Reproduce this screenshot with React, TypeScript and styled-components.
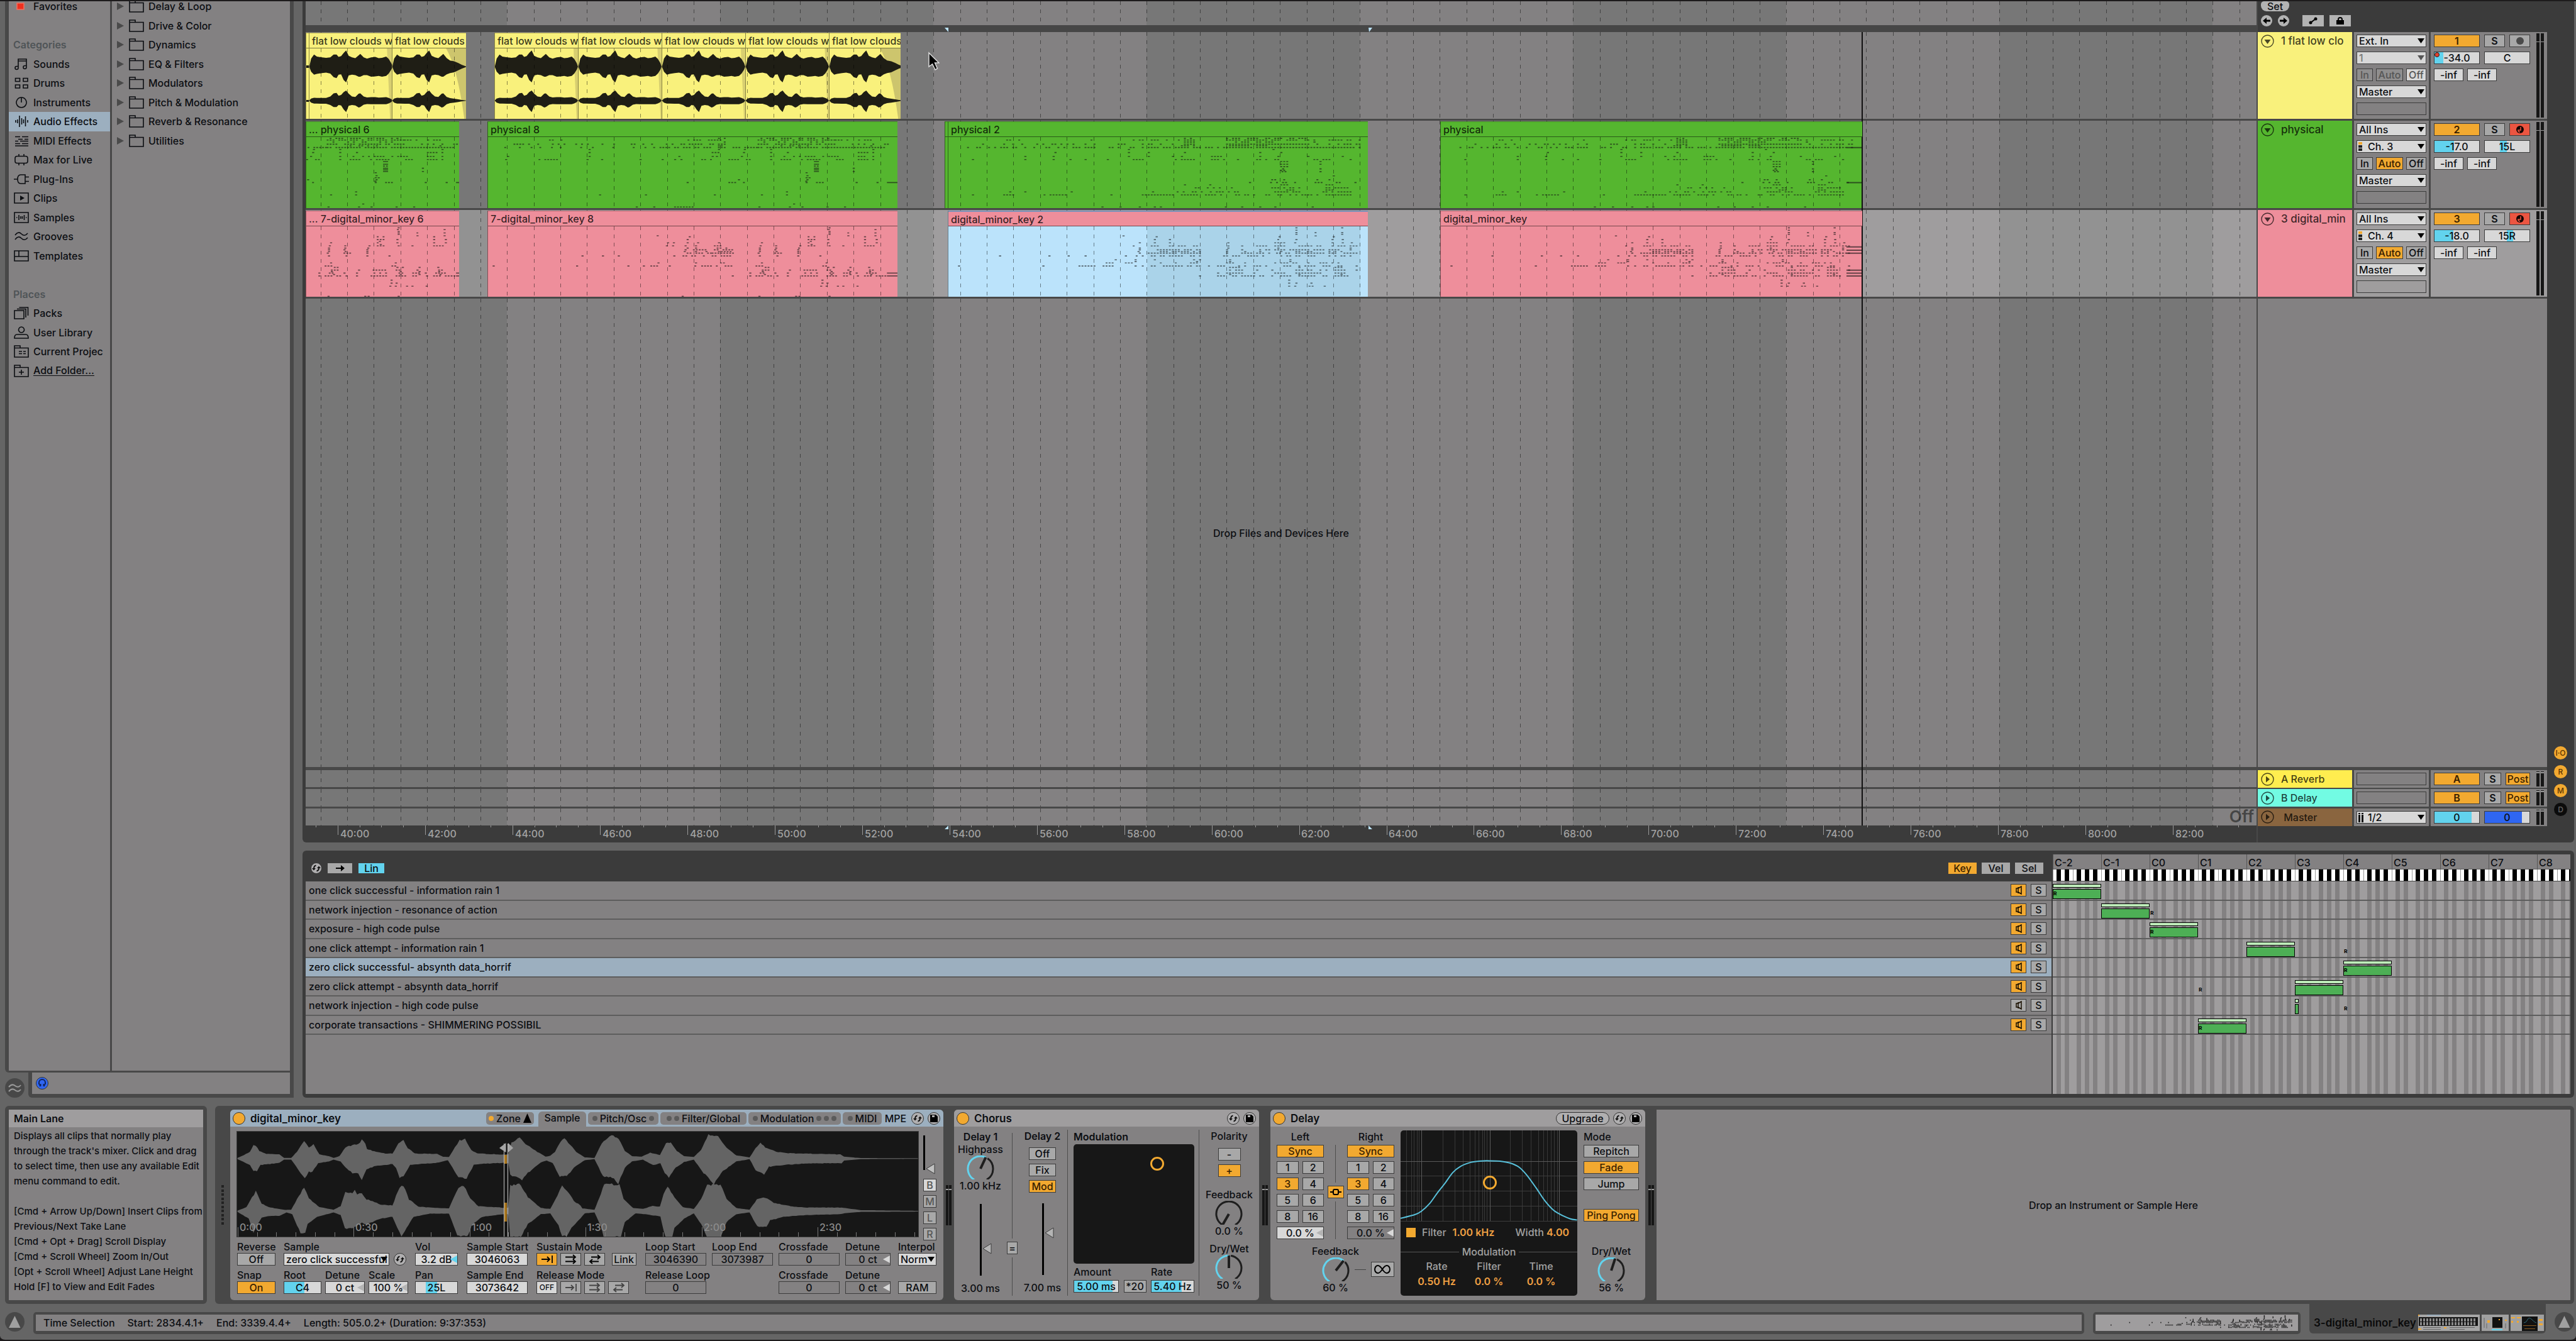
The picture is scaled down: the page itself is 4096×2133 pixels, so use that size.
import React, { ReactNode } from 'react';
import styled, { createGlobalStyle, css } from 'styled-components';

const c = {
  bg: '#656565',
  frame: '#484848',
  deep: '#3b3b3b',
  panel: '#838182',
  band: '#777777',
  light: '#9f9d9e',
  lightBand: '#929292',
  button: '#a8a8a8',
  field: '#d8d8d8',
  orange: '#f2a930',
  cyan: '#62d3ee',
  blue: '#2f66f2',
  select: '#9cafbf',
  ink: '#0c0e12',
  line: '#3c3c3c',
  screen: '#171717',
  yellow: '#f9f17c',
  green: '#55b62f',
  pink: '#ee8e9b',
  sky: '#bbe3fb',
};

const Global = createGlobalStyle`
  *, *::before, *::after { box-sizing: border-box; }
  body { margin: 0; background: #1d1b1c; font: 500 16px/20px Inter, "Liberation Sans", sans-serif; color: ${c.ink}; }
  button, input, select { font: inherit; color: inherit; margin: 0; padding: 0; border-radius: 0; }
  ul { list-style: none; margin: 0; padding: 0; }
  a { color: inherit; text-decoration: none; }
  svg { display: block; flex: none; }
`;

/* ---------- shared controls ---------- */

const Button = styled.button<{ $w?: number; $on?: boolean; $tone?: string; $dim?: boolean; $strong?: boolean; $bare?: boolean }>`
  width: ${p => (p.$w ? p.$w + 'px' : '100%')};
  height: 20px;
  flex: none;
  display: flex;
  align-items: center;
  justify-content: center;
  white-space: nowrap;
  border: ${p => (p.$bare ? 0 : 1)}px solid ${c.line};
  background: ${p => p.$tone || (p.$on ? c.orange : c.button)};
  color: ${p => (p.$dim ? '#565656' : p.$on ? '#3a1f00' : c.ink)};
  font-weight: ${p => (p.$strong ? 600 : 500)};
  line-height: 18px;
`;

const Input = styled.input<{ $w?: number; $from?: number; $to?: number; $fill?: string; $off?: boolean }>`
  width: ${p => (p.$w ? p.$w + 'px' : '100%')};
  height: 20px;
  flex: none;
  text-align: center;
  border: 1px solid ${c.line};
  background: ${p => {
    const base = p.$off ? c.panel : c.field;
    const fill = p.$fill || c.cyan;
    const a = p.$from || 0;
    const b = p.$to || 0;
    return `linear-gradient(to right, ${base} ${a}%, ${fill} ${a}% ${b}%, ${base} ${b}%)`;
  }};
`;

const SelectBox = styled.div<{ $w?: number; $dim?: boolean; $inset?: number }>`
  position: relative;
  width: ${p => (p.$w ? p.$w + 'px' : '100%')};
  height: 20px;
  select {
    appearance: none;
    width: 100%;
    height: 20px;
    line-height: 18px;
    border: 1px solid ${c.line};
    background: ${c.field};
    color: ${p => (p.$dim ? '#777' : c.ink)};
    padding-left: ${p => p.$inset || 3}px;
    opacity: 1;
  }
`;
const SelectArrow = styled.svg`
  position: absolute;
  right: 3px;
  top: 6px;
  pointer-events: none;
`;
const SelectMark = styled.svg`
  position: absolute;
  left: 3px;
  top: 3px;
  pointer-events: none;
`;

function Select({ label, value, w, dim, mark }: { label: string; value: string; w?: number; dim?: boolean; mark?: 'midi' | 'bars' }) {
  return (
    <SelectBox $w={w} $dim={dim} $inset={mark ? 17 : 3}>
      <select aria-label={label} defaultValue={value}><option>{value}</option></select>
      {mark === 'midi' && (
        <SelectMark width="6" height="14"><path d="M0 0h6v4H0z" fill={c.orange} /><path d="M0 5h6v4H0zM0 10h6v4H0z" fill="#222" /></SelectMark>
      )}
      {mark === 'bars' && (
        <SelectMark width="8" height="15"><path d="M0 0h3v2H0zM5 0h3v2H5zM0 3h3v12H0zM5 3h3v12H5z" fill="#111" /></SelectMark>
      )}
      <SelectArrow width="11" height="8"><path d="M0 0h11L5.500 8z" fill={dim ? '#555' : '#000'} /></SelectArrow>
    </SelectBox>
  );
}

const HiddenRange = styled.input`
  position: absolute;
  inset: 0;
  width: 100%;
  height: 100%;
  opacity: 0;
`;
const RangeShell = styled.label`
  position: relative;
  display: block;
`;

const polar = (deg: number, r: number) => {
  const a = ((deg - 90) * Math.PI) / 180;
  return `${(23 + r * Math.cos(a)).toFixed(2)} ${(21 + r * Math.sin(a)).toFixed(2)}`;
};
const arc = (a: number, b: number) => `M${polar(a, 20)}A20 20 0 ${b - a > 180 ? 1 : 0} 1 ${polar(b, 20)}`;

function Knob({ label, angle }: { label: string; angle: number }) {
  return (
    <RangeShell>
      <svg width="46" height="38" fill="none" strokeWidth="3">
        {angle > -150 && <path d={arc(-150, angle)} stroke={c.cyan} />}
        <path d={arc(angle > -150 ? angle + 9 : -150, 150)} stroke="#1e1e1e" />
        <path d={`M23 21L${polar(angle, 20)}`} stroke="#1e1e1e" strokeWidth="4" />
      </svg>
      <HiddenRange type="range" aria-label={label} min={-150} max={150} defaultValue={angle} />
    </RangeShell>
  );
}

function Fader({ label, height, at }: { label: string; height: number; at: number }) {
  return (
    <RangeShell>
      <svg width="40" height={height}>
        <path d={`M19 0h3v${height}h-3z`} fill="#000" />
        <path d={`M24 ${at}l13 -8v16z`} fill="#b4b4b4" stroke={c.line} />
      </svg>
      <HiddenRange type="range" aria-label={label} defaultValue={50} />
    </RangeShell>
  );
}

const RoundButton = styled.button<{ $fill?: string }>`
  width: 20px;
  height: 20px;
  border-radius: 50%;
  border: 1px solid #333;
  background: ${p => p.$fill || '#b0afb0'};
  display: flex;
  align-items: center;
  justify-content: center;
  flex: none;
`;

const SwapIcon = () => (
  <svg width="14" height="14" viewBox="0 0 14 14" fill="none" stroke="#111" strokeWidth="2">
    <path d="M6.500 2.500Q3 3 3 8M7.500 11.500Q11 11 11 6" />
    <path d="M0 7h6L3 10.500zM8 7h6L11 3.500z" fill="#111" stroke="none" />
  </svg>
);
const DiskIcon = () => (
  <svg width="12" height="12" viewBox="0 0 12 12"><path d="M0 0h9l3 3v9H0z" fill="#000" /><path d="M3 1h4v3H3z" fill="#b0afb0" /></svg>
);

/* ---------- frame ---------- */

const Shell = styled.div`
  height: 100vh;
  display: flex;
  flex-direction: column;
  gap: 13px;
  padding: 0 3px 9px 8px;
  background: ${c.bg};
  border-top: 2px solid #1d1b1c;
  border-bottom: 2px solid #1d1b1c;
  border-radius: 0 0 8px 8px;
  overflow: hidden;
`;
const Upper = styled.div`
  flex: 1;
  min-height: 0;
  display: flex;
  gap: 14px;
`;
const MainColumn = styled.div`
  flex: 1;
  min-width: 0;
  display: flex;
  flex-direction: column;
  gap: 13px;
`;

/* ---------- browser ---------- */

const Sidebar = styled.aside`
  width: 459px;
  flex: none;
  display: flex;
  flex-direction: column;
`;
const BrowserFrame = styled.div`
  flex: 1;
  min-height: 0;
  display: grid;
  grid-template-columns: 161px 1fr;
  gap: 3px;
  padding: 0 6px 3px 6px;
  background: ${c.frame};
  border-radius: 0 0 0 6px;
`;
const BrowserColumn = styled.nav`
  background: ${c.panel};
  overflow: hidden;
`;
const EntryList = styled.ul<{ $rows: number }>`
  height: ${p => (p.$rows * 61) / 2}px;
  margin-top: -7px;
  display: grid;
  grid-auto-rows: 1fr;
  line-height: 16px;
`;
const Entry = styled.li<{ $heading?: boolean; $active?: boolean; $gap?: number }>`
  display: flex;
  align-items: center;
  white-space: nowrap;
  padding-left: ${p => (p.$heading ? 7 : 8)}px;
  color: ${p => (p.$heading ? '#4f5457' : 'inherit')};
  font-weight: ${p => (p.$heading ? 600 : 500)};
  background: ${p => (p.$active ? c.select : 'none')};
  a { display: flex; align-items: center; gap: ${p => p.$gap || 7}px; }
`;
const Underlined = styled.span`
  border-bottom: 1px solid ${c.ink};
`;
const SidebarFoot = styled.div`
  display: flex;
  justify-content: space-between;
`;
const PreviewFrame = styled.div`
  width: 422px;
  padding: 0 6px 6px;
  background: ${c.frame};
  border-radius: 0 0 0 6px;
`;
const PreviewBar = styled.div`
  height: 34px;
  background: ${c.panel};
  display: flex;
  align-items: center;
  padding-left: 6px;
`;
const CornerButton = styled.button<{ $top?: boolean }>`
  width: 31px;
  height: 31px;
  border: 0;
  border-radius: 50%;
  background: ${c.frame};
  display: flex;
  align-items: center;
  justify-content: center;
  align-self: ${p => (p.$top ? 'flex-start' : 'flex-end')};
`;

const glyph: Record<string, ReactNode> = {
  favorites: <path d="M5 5h11v10H5z" fill="#ee2f1d" stroke="#f07060" />,
  sounds: <path d="M7 16V2h13v13M7 5h13M7 16a2.500 2.500 0 1 1 -2.500 -2.500H7M20 15a2.500 2.500 0 1 1 -2.500 -2.500H20" />,
  drums: <path d="M2.500 2.500h7v5h-7zM15 2.500h7v5h-7zM2.500 13h7v5h-7zM15 13h7v5h-7z" />,
  instruments: <path d="M12 2a8 8 0 1 0 .1 0zM12 2v8" />,
  audio: <path d="M3 8v4M6 7v6M9 1v18M12.500 5v10M15.500 7v6M18.500 2v16M22 8v4" />,
  midi: <path d="M2 3.500h8M13 3.500h10M7 7.500h7M17 7.500h6M2 10.500h5M10 10.500h13M2 14.500h8M13 14.500h10M2 18h21" />,
  max: <path d="M5 4.500h14q3 0 3 3v5q0 3 -3 3H5q-3 0 -3 -3v-5q0 -3 3 -3zM8 1v3.500M16 1v3.500M8 15.500V19M16 15.500V19" />,
  plug: <path d="M0 10h6M18 3H11Q6 3 6 10T11 17H18zM18 6.500h6M18 13.500h6" />,
  clips: <><path d="M1 2h22v16H1z" /><path d="M10 6l7 4l-7 4z" fill="#0c0e12" stroke="none" /></>,
  samples: <path d="M1 2h22v16H1zM4 10h1.500M8 6v8M11 8v4M13.500 8v4M16.500 6v8M19 10h1.500" />,
  grooves: <path d="M2 8Q7 1 12 6T22 5M2 15Q7 8 12 13T22 12" />,
  templates: <path d="M1 2h22v16H1zM8 2v9M1 11h22" />,
  packs: <path d="M1 6h15v13H1zM5 3.500h14V17M8.500 1h14v13" />,
  user: <path d="M12 1a4.500 4.500 0 1 0 .1 0zM5 13h14q4 0 4 6H1q0 -6 4 -6z" />,
  project: <path d="M1 4.500V1h9v3.500M1 4.500h22V19H1zM8 10h5M8 13.500h5M15 10h4M15 13.500h4" />,
  add: <path d="M1 4.500V1h9v3.500M1 4.500h22V19H1zM12 8v8M8 12h8" />,
  folder: <path d="M1 4.500V1h9v3.500M1 4.500h22V19H1z" />,
};
const Glyph = ({ name }: { name: string }) => (
  <svg width="24" height="20" viewBox="0 0 24 20" fill="none" stroke="#0c0e12" strokeWidth="1.600">{glyph[name]}</svg>
);

const places: [string, string][] = [
  ['favorites', 'Favorites'], ['', ''], ['#', 'Categories'], ['sounds', 'Sounds'], ['drums', 'Drums'],
  ['instruments', 'Instruments'], ['audio', 'Audio Effects'], ['midi', 'MIDI Effects'], ['max', 'Max for Live'],
  ['plug', 'Plug-Ins'], ['clips', 'Clips'], ['samples', 'Samples'], ['grooves', 'Grooves'], ['templates', 'Templates'],
  ['', ''], ['#', 'Places'], ['packs', 'Packs'], ['user', 'User Library'], ['project', 'Current Projec'], ['add', 'Add Folder...'],
];
const folders = ['Delay & Loop', 'Drive & Color', 'Dynamics', 'EQ & Filters', 'Modulators', 'Pitch & Modulation', 'Reverb & Resonance', 'Utilities'];

function Browser() {
  return (
    <Sidebar>
      <BrowserFrame>
        <BrowserColumn aria-label="Places">
          <EntryList $rows={places.length}>
            {places.map(([icon, text], i) => (
              <Entry key={i} $heading={icon === '#'} $active={icon === 'audio'}>
                {icon === '#' || !icon ? text : (
                  <a href={'#' + icon}>
                    <Glyph name={icon} />
                    {icon === 'add' ? <Underlined>{text}</Underlined> : text}
                  </a>
                )}
              </Entry>
            ))}
          </EntryList>
        </BrowserColumn>
        <BrowserColumn aria-label="Content">
          <EntryList $rows={folders.length}>
            {folders.map(text => (
              <Entry key={text}>
                <a href="#folder">
                  <svg width="12" height="12"><path d="M0 0l11 6l-11 6z" fill="#4a4a4a" /></svg>
                  <Glyph name="folder" />
                  {text}
                </a>
              </Entry>
            ))}
          </EntryList>
        </BrowserColumn>
      </BrowserFrame>
      <SidebarFoot>
        <CornerButton aria-label="Groove pool">
          <svg width="21" height="16" fill="none" stroke="#9a9a9a" strokeWidth="2"><path d="M1 6Q6 0 11 4T20 3M1 13Q6 7 11 11T20 10" /></svg>
        </CornerButton>
        <PreviewFrame>
          <PreviewBar>
            <RoundButton aria-label="Preview" $fill={c.blue}>
              <svg width="16" height="16" viewBox="0 0 16 16" fill="none" stroke="#10245f" strokeWidth="2"><path d="M3 10V7a5 5 0 0 1 10 0v3" /><path d="M5 9v4M11 9v4" strokeWidth="3" /></svg>
            </RoundButton>
          </PreviewBar>
        </PreviewFrame>
      </SidebarFoot>
    </Sidebar>
  );
}

/* ---------- arrangement ---------- */

const BAND = 339;
const SCALE = 0.839;
const ORIGIN = 580;
const at = (x: number) => Math.round((x - ORIGIN) * SCALE);

const Arrangement = styled.section`
  flex: 1;
  min-height: 0;
  display: flex;
  padding-left: 5px;
  background: ${c.deep};
  border-radius: 0 0 6px 6px;
`;
const Timeline = styled.div`
  position: relative;
  flex: 1;
  min-width: 0;
  display: flex;
  flex-direction: column;
  border-right: 2px solid ${c.frame};
`;
const bands = (a: string, b: string) => css`
  background: repeating-linear-gradient(to right, ${a} 0 ${BAND}px, ${b} ${BAND}px ${BAND * 2}px) -19px 0 / calc(100% + 19px) 100%;
`;
const Overview = styled.div`
  position: relative;
  height: 38px;
  ${bands(c.band, c.panel)}
`;
const ScrubBar = styled.div`
  position: relative;
  height: 11px;
  background: #464646;
`;
const TrackStack = styled.div`
  height: 424px;
  flex: none;
  display: grid;
  grid-auto-rows: 1fr;
`;
const Lane = styled.div<{ $selected?: boolean }>`
  position: relative;
  overflow: hidden;
  border-bottom: 3px solid ${c.frame};
  ${p => (p.$selected ? bands(c.lightBand, c.light) : bands(c.band, c.panel))}
`;
const DropArea = styled.div`
  position: relative;
  flex: 1;
  display: flex;
  align-items: center;
  justify-content: center;
  ${bands(c.band, c.panel)}
`;
const ReturnStack = styled.div`
  height: 93px;
  flex: none;
  border-top: 5px solid ${c.frame};
  display: grid;
  grid-auto-rows: 1fr;
  gap: 3px;
  background: ${c.frame};
`;
const ReturnLane = styled.div`
  position: relative;
  overflow: hidden;
  display: flex;
  align-items: center;
  justify-content: flex-end;
  padding-right: 4px;
  ${bands(c.band, c.panel)}
`;
const AutomationOff = styled.span`
  font-size: 26px;
  font-weight: 600;
  color: #454545;
`;
const Overlay = styled.svg`
  position: absolute;
  inset: 0;
  width: 100%;
  height: 100%;
  pointer-events: none;
`;
const Ruler = styled.div`
  position: relative;
  height: 27px;
  overflow: hidden;
`;
const TimeLabel = styled.span`
  position: absolute;
  top: 3px;
  color: #a2a2a2;
  padding-left: 4px;
`;
const PlayEnd = styled.div`
  position: absolute;
  top: 49px;
  bottom: 27px;
  width: 2px;
  background: #111;
`;
const LoopMark = styled.svg`
  position: absolute;
  bottom: 0;
`;
const Pointer = styled.svg`
  position: absolute;
  left: 990px;
  top: 80px;
  z-index: 5;
`;

const barPath = Array.from({ length: 130 }, (_, i) => `M${Math.round(23.7 + (i * BAND) / 8) + 0.5} 0V1200`).join('');
const BarLines = () => (
  <Overlay><path d={barPath} stroke="#000" strokeOpacity="0.45" strokeDasharray="6 7" /></Overlay>
);

const Clip = styled.div<{ $color: string }>`
  position: absolute;
  top: 1px;
  bottom: 0;
  overflow: hidden;
  background: ${p => p.$color};
  border-left: 1px solid rgba(0, 0, 0, 0.45);
`;
const ClipName = styled.div<{ $color: string; $lit?: boolean }>`
  height: 25px;
  padding: 3px 0 0 4px;
  line-height: 19px;
  white-space: nowrap;
  overflow: hidden;
  background: ${p => p.$color};
  color: rgba(0, 0, 0, 0.78);
  border-top: ${p => (p.$lit ? '2px solid #7b92b8' : '1px solid rgba(0, 0, 0, 0.3)')};
  border-bottom: 1px solid rgba(0, 0, 0, 0.5);
`;
const ClipTitleLayer = styled.div`
  position: absolute;
  top: 1px;
  z-index: 2;
`;
const ClipShade = styled.div`
  position: absolute;
  top: 25px;
  bottom: 0;
  background: rgba(80, 130, 140, 0.16);
`;
const ClipBody = styled.div`
  padding-top: 26px;
`;
const AudioBody = styled.svg`
  padding-top: 25px;
`;

function rng(seed: number) {
  let s = seed;
  return () => {
    s = (s * 1664525 + 1013904223) % 4294967296;
    return s / 4294967296;
  };
}
/* Each row reads "y: x x-x@density ..." in the pattern's own units. */
function noteRects(rows: string[], start: number, end: number, unit: number, sx: number, sy: number, top: number, h: number, shift = 0) {
  const rand = rng(7);
  let d = '';
  rows.forEach(row => {
    const [y, rest] = row.split(':');
    const py = ((+y - top) * sy).toFixed(1);
    const put = (x: number, w: number) => {
      const px = x + shift;
      if (px >= start && px < end) d += `M${((px - start) * sx).toFixed(1)} ${py}h${(w * sx).toFixed(1)}v${h}h-${(w * sx).toFixed(1)}z`;
    };
    rest.trim().split(' ').forEach(tok => {
      const m = tok.match(/^(\d+)-(\d+)@([\d.]+)$/);
      if (!m) put(+tok, unit * 0.7);
      else if (m[3] === '1') put(+m[1], +m[2] - +m[1]);
      else for (let x = +m[1]; x <= +m[2]; x += unit) if (rand() < +m[3]) put(x, unit * 0.62);
    });
  });
  return d;
}

const physLong = [
  '687: 415-430@.8 485-615@.7', '695: 120-290@.12 290-430@.35 415-430@.9 485-615@.85 615-705@.4', '705: 415-430@.7 500-560@.6 630',
  '716: 40-290@.25 290-420@.4 410-430@.9 485-620@.9 630-705@.5', '723: 410-430@.8 485-560@.6', '732: 40-350@.4 350-485@.7 485-705@.95',
  '742: 322 562', '757: 200 322 355 415 540 575', '776: 150 197 322 355 395 410 450-475@.8 540 570 620 677',
  '792: 63 150 197 225 250 287 310-345@.6 385-480@.65 503 535-575@.6 615-655@.5 690', '802: 575-585@.9 640', '815: 575-585@.9 640', '827: 575-585@.9',
  '838: 578 640', '845: 575-585@.9', '852: 577-582@.9 640', '873: 662', '892: 560-580@.7 630-665@.5', '906: 523 558-600@.5 632-680@.6 698',
  '917: 415 457 575-590@.7 650-660@.8', '932: 403-505@.35 560-610@.65 645-690@.6', '943: 580-595@.6 650-662@.8', '952: 125 150 227 362 403-505@.5 555-610@.7 645-690@.7',
  '967: 63 115-130@.9 182-235@.6 293 345-485@.7 500-635@.6 645-690@.8', '1027: 278 308 340 365 375 483 510 540 565 627',
];
const physEight = [
  '687: 1000-1020@.8 1095-1250@.7 1262', '695: 560-700@.12 920-1020@.5 1095-1280@.8 1280-1380@.4', '705: 1000-1020@.7 1095-1250@.5',
  '716: 475-560@.2 560-930@.3 930-1020@.6 1095-1280@.85 1300-1410@.5', '724: 1000-1010@.8 1150-1220@.6 1365', '732: 460-860@.22 860-1095@.7 1095-1400@.95',
  '742: 690 1000 1062 1125 1370', '757: 690 985-1000@.8 1060 1125 1165 1335-1375@.7', '776: 495 690 905 985 995 1055 1125 1150-1160@.9 1180-1290@.5 1335-1375@.7',
  '792: 490 570-620@.7 685 720 812 865 895 910 960-1000@.8 1025-1080@.8 1125 1150-1300@.65 1335-1375@.8', '802: 1230-1242@1', '815: 1230-1242@1', '824: 1230-1242@.9',
  '835: 1230-1242@1 1323', '843: 1230-1242@1', '851: 1230-1242@1 1323', '857: 1210', '872: 1212', '882: 1210 1217', '892: 1048 1212', '899: 1209',
  '906: 925 1025-1065@.7 1210 1235-1250@.9 1330 1380 1405-1431@1', '952: 1163', '967: 715 825 990 1103 1163', '1012: 1180', '1027: 803 845 895-940@.7 1097 1170 1200 1260 1302',
];
const keyLong = [
  '1128: 600 676', '1140: 600', '1152: 600 632-640@.9 676', '1160: 600 676', '1168: 313 632', '1172: 368 572 662', '1186: 365 390 570-577@.9 600 660 677',
  '1202: 340 365 390 487 565-580@.9 598 660 677 692', '1218: 330-342@.8 360-440@.6 487 510 535-550@.8 565-580@.8 595-645@.6 655-700@.6',
  '1228: 340 487 570 690', '1237: 340 370-440@.8 485 510 530-560@.7 565-600@.8 600-645@.85 655-670@.9 690',
  '1246: 338 375-440@.8 485 515 540 575 600-645@.8 655-690@.6', '1253: 340 355-440@.85 485 510-525@.9 535-558@.8 568-590@.8 600-645@.9 655-700@.75',
  '1267: 108 190 222 250 317 330-350@.8 360-440@.55 480-550@.7 565-645@.65 655-700@.6', '1286: 300 333 365 430 440 490 590', '1295: 333 435 490 590',
  '1302: 285-295@.9 317-333@.7 365-440@.4 485-515@.7 555-600@.5 620 640-670@.6', '1317: 40 180 240-320@.65 333 345-485@.55 500-550@.4 580-680@.6 700',
  '1324: 490-510@.8 605 665-680@.7', '1337: 490-515@.5 535 560 600-650@.6 665-680@.9 700', '1352: 470 485-510@.9 530 560-580@.8 600-640@.85 665-680@.95',
  '1359: 490 605 675', '1366: 440 470-550@.65 560-650@.8 660-700@.75', '1387: 588', '1402: 588 600 625', '1417: 588 598 612-630@.7 647',
];
const keyEight = [
  '1128: 1265', '1137: 1263 1375', '1146: 1265', '1153: 1265 1310-1320@.9 1375', '1160: 1265', '1167: 853 1310 1375', '1172: 930 1215-1230@.9 1350', '1186: 925 1215-1230@.95 1262 1350 1378',
  '1195: 1220', '1202: 878 892 925 950 1000 1103 1215-1232@.95 1262 1350 1378', '1210: 1222', '1217: 875 890 920 945 990-1030@.6 1100 1137 1195 1215-1230@.9 1265 1298 1350-1375@.8',
  '1228: 925 945 990-1020@.8 1098 1137 1192', '1237: 920 940-980@.7 990-1035@.9 1098 1135 1190', '1246: 918 945 970 1000-1030@.9 1098 1138 1190',
  '1253: 925-985@.9 985-1035@.95 1095 1135-1155@.9 1190', '1267: 673 722 760 893 915-975@.75 985-1030@.8 1098 1140 1190 1243', '1302: 855 945 1005-1015@.9 1103 1258',
  '1317: 460 660 783 820 838-855@.9 882 943 960-1035@.6 1090-1110@.8 1250-1260@.9', '1324: 1105-1125@.8 1262 1275 1315 1360', '1337: 1105-1120@.9 1170 1205-1235@.9 1260-1280@.8 1310 1355-1375@.8',
  '1345: 1105 1270 1315 1362', '1352: 1075 1100-1120@.9 1135 1165 1200-1235@.7 1260-1280@.9 1300-1320@.8 1330 1355-1380@.8 1405-1431@1', '1359: 1110 1270 1315 1365',
  '1366: 1033 1075 1090-1130@.9 1140 1165 1200-1235@.8 1260-1285@.95 1300-1320@.8 1333 1350-1400@.7 1405-1431@1', '1387: 1248', '1402: 1248 1260', '1417: 1245 1258 1285 1298 1332', '1467: 913 1097 1185 1193 1265',
];

type NoteSpec = { rows: string[]; start: number; end: number; shift?: number; wide?: boolean; tail?: number[] };
function Notes({ spec, top }: { spec: NoteSpec; top: number }) {
  const sx = spec.wide ? 0.9578 : 0.6635;
  const d = noteRects(spec.rows, spec.start, spec.end, spec.wide ? 5 : 7, sx, 0.3211, top, 1.6, spec.shift);
  return (
    <svg width="100%" height="112" fill="#141414" fillOpacity="0.62">
      <path d={d} />
      {spec.tail && <path d={spec.tail.map(y => `M645 ${((y - top) * 0.3211).toFixed(1)}h27v2h-27z`).join('')} />}
    </svg>
  );
}

type ClipSpec = { name: string; x0: number; x1: number; notes: NoteSpec; sky?: boolean };
const physClips: ClipSpec[] = [
  { name: '... physical 6', x0: 580, x1: 870.5, notes: { rows: physEight, start: 12, end: 380, shift: -1034 } },
  { name: 'physical 8', x0: 925, x1: 1701.6, notes: { rows: physEight, start: 449, end: 1431 } },
  { name: '', x0: 1791.5, x1: 1797.5, notes: { rows: [], start: 0, end: 1 } },
  { name: 'physical 2', x0: 1797.5, x1: 2593, notes: { rows: physLong, start: 24, end: 721, wide: true } },
  { name: 'physical', x0: 2730, x1: 3530, notes: { rows: physLong, start: 24, end: 721, wide: true, tail: [732, 906] } },
];
const keyClips: ClipSpec[] = [
  { name: '... 7-digital_minor_key 6', x0: 580, x1: 870.5, notes: { rows: keyEight, start: 12, end: 380, shift: -1034 } },
  { name: '7-digital_minor_key 8', x0: 925, x1: 1701.6, notes: { rows: keyEight, start: 449, end: 1431 } },
  { name: 'digital_minor_key 2', x0: 1797.5, x1: 2593, notes: { rows: keyLong, start: 24, end: 721, wide: true }, sky: true },
  { name: 'digital_minor_key', x0: 2730, x1: 3530, notes: { rows: keyLong, start: 24, end: 721, wide: true, tail: [1222, 1238, 1253, 1337, 1352, 1366] } },
];
const audioClips: [number, number][] = [[580, 586.5], [586.5, 743], [743, 884], [937, 1095.5], [1095.5, 1254.5], [1254.5, 1413], [1413, 1572], [1572, 1707]];

/* x, upper reach, lower reach for the two channels of one audio loop */
const loopShape = [
  [0, 3, 3, 2, 2], [4, 40, 25, 10, 10], [11, 60, 40, 14, 15], [18, 50, 36, 13, 15], [30, 46, 32, 13, 16], [40, 44, 30, 13, 16], [50, 46, 34, 20, 22], [58, 60, 52, 36, 32], [65, 60, 57, 38, 32],
  [70, 48, 40, 24, 22], [76, 52, 38, 28, 24], [82, 68, 66, 42, 44], [88, 80, 78, 50, 57], [94, 54, 44, 34, 26], [102, 46, 40, 20, 22], [110, 42, 42, 18, 24], [118, 56, 50, 34, 34], [122, 63, 50, 36, 32],
  [130, 46, 42, 20, 20], [138, 40, 42, 16, 17], [148, 46, 50, 17, 18], [158, 48, 48, 17, 18], [166, 42, 46, 15, 18], [174, 44, 50, 16, 18], [184, 50, 46, 17, 18], [190, 38, 34, 13, 14], [196, 18, 16, 8, 8], [200, 4, 3, 2, 2],
];
function loopPath(width: number, fade: boolean) {
  const pts = loopShape.filter(p => p[0] <= width);
  const k = (p: number[]) => (fade && p[0] > 125 ? Math.max(0.03, 1 - (p[0] - 125) / (width - 125)) : 1);
  const side = (mid: number, up: number, down: number) => {
    const tops = pts.map(p => `${(p[0] * 0.6635).toFixed(1)} ${(mid - p[up] * k(p) * 0.3211).toFixed(1)}`);
    const bots = pts.map(p => `${(p[0] * 0.6635).toFixed(1)} ${(mid + p[down] * k(p) * 0.3211).toFixed(1)}`).reverse();
    const tip = `L${(width * 0.6635).toFixed(1)} ${mid}`;
    return 'M' + tops.join('L') + tip + 'L' + bots.join('L') + 'z';
  };
  return side(29, 1, 2) + side(83, 3, 4);
}

function AudioLane() {
  return (
    <Lane>
      {audioClips.map(([a, b], i) => {
        const last = i === 2 || i === 7;
        const w = (b - a) * SCALE;
        return (
          <React.Fragment key={i}>
            <Clip $color={c.yellow} style={{ left: at(a), width: at(b) - at(a) }}>
              <AudioBody width="100%" height="137">
                {last && <path d={`M${w - 33} 0Q${w - 15} 30 ${w - 4} 112H${w}V0z`} fill="#cdc56d" />}
                {!last && i > 0 && <path d={`M${w - 8} 0L${w - 3} 112H${w}V0z`} fill="#d8cf70" />}
                {i > 0 && <path d={loopPath(last ? 178 : 199, last)} fill="#1f1e15" />}
                {i === 0 && <path d="M0 27h6v4H0zM0 82h6v3H0z" fill="#1f1e15" />}
              </AudioBody>
            </Clip>
            <ClipTitleLayer style={{ left: at(a) + 1, width: at(b) - at(a) - 1 }}>
              <ClipName $color={c.yellow}>{i === 0 ? '' : last ? 'flat low clouds' : 'flat low clouds w'}</ClipName>
            </ClipTitleLayer>
          </React.Fragment>
        );
      })}
      <BarLines />
    </Lane>
  );
}

function MidiLane({ clips, color, top, selected }: { clips: ClipSpec[]; color: string; top: number; selected?: boolean }) {
  return (
    <Lane $selected={selected}>
      {clips.map((clip, i) => (
        <React.Fragment key={i}>
          <Clip $color={clip.sky ? c.sky : color} style={{ left: at(clip.x0), width: at(clip.x1) - at(clip.x0) }}>
            {clip.sky && <ClipShade style={{ left: at(2173) - at(clip.x0), width: BAND }} />}
            <ClipBody><Notes spec={clip.notes} top={top} /></ClipBody>
          </Clip>
          <ClipTitleLayer style={{ left: at(clip.x0) + 1, width: at(clip.x1) - at(clip.x0) - 1 }}>
            <ClipName $color={color} $lit={clip.sky}>{clip.name}</ClipName>
          </ClipTitleLayer>
        </React.Fragment>
      ))}
      <BarLines />
    </Lane>
  );
}

/* ---------- track headers ---------- */

const Headers = styled.div`
  width: 460px;
  flex: none;
  display: flex;
  flex-direction: column;
`;
const HeaderTools = styled.div`
  height: 49px;
  padding: 0 0 9px 5px;
  display: flex;
  flex-direction: column;
  justify-content: space-between;
  align-items: flex-start;
`;
const SetPill = styled.button`
  width: 45px;
  height: 16px;
  border: 0;
  border-radius: 5px 5px 9px 9px;
  background: #b3b3b3;
  line-height: 16px;
`;
const ToolRow = styled.div`
  display: flex;
  gap: 9px;
  button:nth-child(3) { margin-left: 12px; }
`;
const RoundTool = styled.button`
  width: 18px;
  height: 18px;
  border: 0;
  border-radius: 50%;
  background: #b3b3b3;
  display: flex;
  align-items: center;
  justify-content: center;
`;
const SquareTool = styled.button`
  width: 34px;
  height: 18px;
  border: 0;
  background: #b3b3b3;
  display: flex;
  align-items: center;
  justify-content: center;
`;
const HeaderRow = styled.div<{ $line?: boolean }>`
  display: grid;
  grid-template-columns: 150px 119px 1fr;
  gap: 3px;
  background: ${c.frame};
  border-bottom: ${p => (p.$line ? `3px solid ${c.frame}` : 0)};
  min-height: 0;
`;
const NameCell = styled.div<{ $color: string; $compact?: boolean }>`
  background: ${p => p.$color};
  display: flex;
  align-items: ${p => (p.$compact ? 'center' : 'flex-start')};
  gap: 11px;
  padding: ${p => (p.$compact ? '0 0 0 5px' : '4px 0 0 5px')};
  font-size: ${p => (p.$compact ? 16 : 17)}px;
  white-space: nowrap;
  overflow: hidden;
  color: rgba(0, 0, 0, 0.75);
`;
const ControlCell = styled.div<{ $selected?: boolean; $compact?: boolean }>`
  background: ${p => (p.$selected ? c.light : c.panel)};
  padding: 4px;
  display: flex;
  flex-direction: column;
  justify-content: ${p => (p.$compact ? 'center' : 'flex-start')};
  gap: 7px;
`;
const MixCell = styled(ControlCell)`
  flex-direction: row;
  align-items: ${p => (p.$compact ? 'center' : 'stretch')};
  justify-content: space-between;
  padding: 2px 5px;
`;
const MixControls = styled.div<{ $compact?: boolean }>`
  display: flex;
  flex-direction: column;
  gap: 7px;
  padding-top: ${p => (p.$compact ? 0 : 2)}px;
`;
const Row = styled.div<{ $gap?: number }>`
  display: flex;
  align-items: center;
  gap: ${p => p.$gap ?? 7}px;
`;
const EmptySlot = styled.div`
  height: 20px;
  border: 1px solid ${c.line};
`;
const Filler = styled.div`
  flex: 1;
  background: ${c.panel};
`;
const Meter = styled.div`
  width: 12px;
  display: grid;
  grid-template-columns: 5px 5px;
  gap: 2px;
  align-self: stretch;
  i { background: linear-gradient(#161616 0 13px, #999 13px 14px, #161616 14px); }
`;
const SmallMeter = styled(Meter)`
  i { background: linear-gradient(#161616 0 1px, #999 1px 3px, #161616 3px); }
`;
const ArmButton = styled(Button)`
  color: #1a0500;
`;
const AutoDot = styled.span`
  position: absolute;
  left: 1px;
  top: 1px;
  width: 8px;
  height: 8px;
  border-radius: 50%;
  background: #e2402c;
  border: 1px solid #222;
`;
const Stacked = styled.div`
  position: relative;
`;
const ToggleStrip = styled.div`
  width: 43px;
  flex: none;
  display: flex;
  flex-direction: column;
  align-items: center;
  justify-content: flex-end;
  gap: 9px;
  padding-bottom: 42px;
`;
const Toggle = styled.button<{ $off?: boolean }>`
  width: 21px;
  height: 21px;
  border: 0;
  border-radius: 50%;
  background: ${p => (p.$off ? '#0b0b0b' : c.orange)};
  color: ${p => (p.$off ? '#666' : '#5a3300')};
  font-size: 12px;
  line-height: 21px;
`;

const Fold = ({ open }: { open?: boolean }) => (
  <svg width="21" height="21" viewBox="0 0 21 21" fill="none" stroke="rgba(0,0,0,.7)" strokeWidth="1.400">
    <circle cx="10.500" cy="10.500" r="9.500" />
    <path d={open ? 'M5.500 8h10l-5 7z' : 'M8 5.500v10l6 -5z'} fill="rgba(0,0,0,.7)" stroke="none" />
  </svg>
);

type Track = { n: string; name: string; color: string; input: string; ch: string; vol: string; fill: number; pan: string; pf: [number, number]; off?: boolean; selected?: boolean };
const tracks: Track[] = [
  { n: '1', name: '1 flat low clo', color: c.yellow, input: 'Ext. In', ch: '1', vol: '-34.0', fill: 20, pan: 'C', pf: [0, 0], off: true },
  { n: '2', name: 'physical', color: c.green, input: 'All Ins', ch: 'Ch. 3', vol: '-17.0', fill: 43, pan: '15L', pf: [34, 49] },
  { n: '3', name: '3 digital_min', color: c.pink, input: 'All Ins', ch: 'Ch. 4', vol: '-18.0', fill: 42, pan: '15R', pf: [50, 63], selected: true },
];

function TrackHeader({ t }: { t: Track }) {
  return (
    <HeaderRow $line>
      <NameCell $color={t.color}><Fold open />{t.name}</NameCell>
      <ControlCell $selected={t.selected}>
        <Select label={`Input of track ${t.n}`} value={t.input} />
        <Select label={`Channel of track ${t.n}`} value={t.ch} dim={t.off} mark={t.off ? undefined : 'midi'} />
        <Row $gap={5}>
          <Button $w={26} $dim={t.off} $tone={t.off ? '#8f8e8e' : undefined}>In</Button>
          <Button $w={43} $dim={t.off} $on={!t.off} $tone={t.off ? '#8f8e8e' : undefined}>Auto</Button>
          <Button $w={32} $dim={t.off} $tone={t.off ? c.field : undefined}>Off</Button>
        </Row>
        <Select label={`Output of track ${t.n}`} value="Master" />
        <EmptySlot />
      </ControlCell>
      <MixCell $selected={t.selected}>
        <MixControls>
          <Row>
            <Button $w={73} $on $strong>{t.n}</Button>
            <Button $w={33} $strong>S</Button>
            <ArmButton $w={33} $tone={t.off ? c.button : '#ec5541'} aria-label="Arm">
              {t.off ? <svg width="12" height="12"><circle cx="6" cy="6" r="6" fill="#4a4a4a" /></svg>
                : <svg width="12" height="12"><circle cx="6" cy="6" r="6" fill="#150503" /><path d="M7 2v5H3q0 3 3 3" stroke="#ec5541" fill="none" strokeWidth="1.500" /></svg>}
            </ArmButton>
          </Row>
          <Row>
            <Stacked>
              <Input $w={73} $to={t.fill} aria-label={`Volume of track ${t.n}`} defaultValue={t.vol} />
              {t.off && <AutoDot />}
            </Stacked>
            <Input $w={73} $from={t.pf[0]} $to={t.pf[1]} aria-label={`Pan of track ${t.n}`} defaultValue={t.pan} />
          </Row>
          <Row $gap={6}>
            <Input $w={47} aria-label="Send A" defaultValue="-inf" />
            <Input $w={47} aria-label="Send B" defaultValue="-inf" />
          </Row>
        </MixControls>
        <Meter><i /><i /></Meter>
      </MixCell>
    </HeaderRow>
  );
}

function ArrangementView() {
  const labels = Array.from({ length: 22 }, (_, i) => 40 + i * 2);
  const tick = (i: number) => Math.round(51 + i * 138.95);
  return (
    <Arrangement>
      <Timeline>
        <Overview><BarLines /></Overview>
        <ScrubBar>
          <LoopMark width="6" height="7" style={{ left: at(1791) }}><path d="M0 0h6v7z" fill={c.sky} /></LoopMark>
          <LoopMark width="6" height="7" style={{ left: at(2594) }}><path d="M0 0h6L1 7z" fill={c.sky} /></LoopMark>
        </ScrubBar>
        <TrackStack>
          <AudioLane />
          <MidiLane clips={physClips} color={c.green} top={686} />
          <MidiLane clips={keyClips} color={c.pink} top={1126} selected />
        </TrackStack>
        <DropArea><BarLines />Drop Files and Devices Here</DropArea>
        <ReturnStack>
          <ReturnLane><BarLines /></ReturnLane>
          <ReturnLane><BarLines /></ReturnLane>
          <ReturnLane><BarLines /><AutomationOff>Off</AutomationOff></ReturnLane>
        </ReturnStack>
        <Ruler>
          <Overlay>
            <path d={Array.from({ length: 90 }, (_, i) => `M${Math.round(51 - 34.74 + i * 34.74) + 0.5} 0v${i % 4 === 1 ? 15 : 3}`).join('')} stroke="#999" />
            <path d={`M${at(1791)} 6h6V0zM${at(2594)} 0v6h6z`} fill={c.sky} />
          </Overlay>
          {labels.map((n, i) => <TimeLabel key={n} style={{ left: tick(i) }}>{n}:00</TimeLabel>)}
        </Ruler>
        <PlayEnd style={{ left: at(3530) - 1 }} />
        <Pointer width="18" height="30" viewBox="0 0 18 30"><path d="M1 2L17 18H10.500L14.500 27L11 29L6.500 20L1 24z" fill="#000" stroke="#ddd" strokeWidth="1.500" /></Pointer>
      </Timeline>
      <Headers>
        <HeaderTools>
          <SetPill>Set</SetPill>
          <ToolRow>
            <RoundTool aria-label="Previous locator"><svg width="12" height="10"><path d="M12 3.500H6V0L0 5l6 5V6.500h6z" /></svg></RoundTool>
            <RoundTool aria-label="Next locator"><svg width="12" height="10"><path d="M0 3.500h6V0l6 5l-6 5V6.500H0z" /></svg></RoundTool>
            <SquareTool aria-label="Automation mode"><svg width="14" height="12"><path d="M3 9L11 3" stroke="#000" strokeWidth="2" /><circle cx="3" cy="9" r="2.500" /><circle cx="11" cy="3" r="2.500" /></svg></SquareTool>
            <SquareTool aria-label="Lock envelopes"><svg width="12" height="12"><path d="M0 5h12v7H0z" /><path d="M3 6V4a3 3 0 0 1 6 0v2" fill="none" stroke="#000" strokeWidth="2" /></svg></SquareTool>
          </ToolRow>
        </HeaderTools>
        <TrackStack>{tracks.map(t => <TrackHeader key={t.n} t={t} />)}</TrackStack>
        <Filler />
        <ReturnStack>
          {[['A', 'A Reverb', '#ffed4f'], ['B', 'B Delay', '#72fbe3']].map(([n, name, color]) => (
            <HeaderRow key={n}>
              <NameCell $color={color} $compact><Fold />{name}</NameCell>
              <ControlCell $compact><EmptySlot /></ControlCell>
              <MixCell $compact>
                <MixControls $compact>
                  <Row>
                    <Button $w={73} $on $strong>{n}</Button>
                    <Button $w={27} $strong>S</Button>
                    <Button $w={39} $on>Post</Button>
                  </Row>
                </MixControls>
                <SmallMeter><i /><i /></SmallMeter>
              </MixCell>
            </HeaderRow>
          ))}
          <HeaderRow>
            <NameCell $color="#8a653f" $compact><Fold />{'\u00a0Master'}</NameCell>
            <ControlCell $compact><Select label="Master output" value="1/2" mark="bars" /></ControlCell>
            <MixCell $compact>
              <MixControls $compact>
                <Row>
                  <Input $w={73} $to={83} aria-label="Master volume" defaultValue="0" />
                  <Input $w={73} $to={83} $fill={c.blue} aria-label="Cue volume" defaultValue="0" />
                </Row>
              </MixControls>
              <SmallMeter><i /><i /></SmallMeter>
            </MixCell>
          </HeaderRow>
        </ReturnStack>
        <Ruler />
      </Headers>
      <ToggleStrip>
        <Toggle>I·O</Toggle><Toggle>R</Toggle><Toggle>M</Toggle><Toggle $off>D</Toggle>
      </ToggleStrip>
    </Arrangement>
  );
}

/* ---------- zone editor ---------- */

const Zones = styled.section`
  flex: none;
  display: flex;
  gap: 2px;
  height: 393px;
  padding: 6px 6px 6px 5px;
  background: ${c.deep};
  border-radius: 6px;
`;
const ZoneSide = styled.div`
  flex: 1;
  display: flex;
  flex-direction: column;
  background: ${c.panel};
`;
const ZoneTools = styled.div`
  height: 43px;
  background: ${c.deep};
  display: flex;
  align-items: center;
  gap: 8px;
  padding: 0 13px 0 8px;
  button { height: 18px; }
`;
const SwapTool = styled(RoundButton)`
  width: 18px;
`;
const Spacer = styled.div`
  flex: 1;
`;
const ZoneRows = styled.ul`
  height: 244px;
  display: grid;
  grid-auto-rows: 1fr;
`;
const ZoneRow = styled.li<{ $active?: boolean }>`
  display: flex;
  align-items: center;
  gap: 7px;
  padding: 0 8px 0 5px;
  border-bottom: 2px solid #5d5d5d;
  background: ${p => (p.$active ? c.select : 'none')};
`;
const KeySide = styled.div`
  width: 823px;
  flex: none;
  display: flex;
  flex-direction: column;
  overflow: hidden;
`;
const black = [1, 3, 6, 8, 10];
const stripes = (dark: string, pale: string, seam: string) => {
  const stops: string[] = [];
  for (let i = 0; i < 12; i++) {
    const col = black.includes(i) ? dark : pale;
    const a = ((i * 100) / 12).toFixed(3);
    const b = (((i + 1) * 100) / 12).toFixed(3);
    if (i === 0 || i === 5) stops.push(`${seam} ${a}% calc(${a}% + 1px)`, `${col} calc(${a}% + 1px) ${b}%`);
    else stops.push(`${col} ${a}% ${b}%`);
  }
  return `linear-gradient(to right, ${stops.join(',')}) 0 0 / 77px 100%`;
};
const Octaves = styled.div`
  height: 24px;
  display: flex;
  background: ${c.panel};
  border-bottom: 1px solid #555;
  span { width: 77px; flex: none; border-left: 1px solid #555; padding: 3px 0 0 2px; }
  span:last-child { flex: 1; }
`;
const Keys = styled.div`
  height: 19px;
  background: ${stripes('#000', '#fff', '#999')};
  border-bottom: 1px solid #444;
`;
const KeyArea = styled.div`
  flex: 1;
  background: ${stripes('#838182', '#9f9d9e', '#9f9d9e')};
`;
const KeyLane = styled.div`
  position: relative;
  border-bottom: 2px solid #5d5d5d;
`;
const Velocity = styled.div`
  position: absolute;
  top: 4px;
  height: 6px;
  border: 1px solid #000;
  background: #bdebb9;
`;
const KeyZone = styled.div`
  position: absolute;
  top: 12px;
  height: 16px;
  border: 1px solid #000;
  background: #4daf55;
`;
const Root = styled.span`
  position: absolute;
  top: 16px;
  padding-left: 1px;
  font: 700 9px/9px "Liberation Mono", monospace;
  color: #000;
`;

const zones: [string, number, number, number, boolean][] = [
  ['one click successful - information rain 1', 0, 12, 0, true],
  ['network injection - resonance of action', 12, 12, 24, true],
  ['exposure - high code pulse', 24, 12, 24, true],
  ['one click attempt - information rain 1', 48, 12, 72, true],
  ['zero click successful- absynth data_horrif', 72, 12, 72, true],
  ['zero click attempt - absynth data_horrif', 60, 12, 36, true],
  ['network injection - high code pulse', 60, 1, 72, false],
  ['corporate transactions - SHIMMERING POSSIBIL', 36, 12, 36, true],
];
const semi = (n: number) => Math.round((n * 77) / 12);

function ZoneEditor() {
  return (
    <Zones>
      <ZoneSide>
        <ZoneTools>
          <SwapTool aria-label="Hot swap"><SwapIcon /></SwapTool>
          <Button $w={41} aria-label="Follow"><svg width="14" height="10"><path d="M0 4h8V0l6 5l-6 5V6H0z" /></svg></Button>
          <Button $w={43} $tone={c.cyan}>Lin</Button>
          <Spacer />
          <Button $w={45} $on $bare>Key</Button>
          <Button $w={45} $bare>Vel</Button>
          <Button $w={45} $bare>Sel</Button>
        </ZoneTools>
        <ZoneRows>
          {zones.map(([name, , , , on], i) => (
            <ZoneRow key={name} $active={i === 4}>
              {name}
              <Spacer />
              <Button $w={25} $on={on} aria-label="Audition">
                <svg width="11" height="14" fill="none" stroke="#1a1000" strokeWidth="1.500"><path d="M5 4H2v6h3M5 2v10M5 4L10 1v12L5 10" /></svg>
              </Button>
              <Button $w={25}>S</Button>
            </ZoneRow>
          ))}
        </ZoneRows>
      </ZoneSide>
      <KeySide>
        <Octaves>{Array.from({ length: 11 }, (_, i) => <span key={i}>C{i - 2}</span>)}</Octaves>
        <Keys />
        <KeyArea>
          <ZoneRows as="div">
            {zones.map(([name, start, len, root]) => (
              <KeyLane key={name}>
                <Velocity style={{ left: semi(start), width: semi(len) }} />
                <KeyZone style={{ left: semi(start), width: semi(len) }} />
                <Root style={{ left: semi(root) }}>R</Root>
              </KeyLane>
            ))}
          </ZoneRows>
        </KeyArea>
      </KeySide>
    </Zones>
  );
}

/* ---------- devices ---------- */

const Lower = styled.div`
  flex: none;
  height: 315px;
  display: flex;
  gap: 13px;
`;
const InfoFrame = styled.aside`
  width: 321px;
  flex: none;
  padding: 6px;
  background: ${c.frame};
  border-radius: 6px;
  display: flex;
  flex-direction: column;
`;
const InfoTitle = styled.h2`
  margin: 0;
  height: 28px;
  padding: 4px 8px;
  font-size: 16px;
  font-weight: 600;
  background: ${c.light};
`;
const InfoText = styled.p`
  margin: 0;
  flex: 1;
  padding: 2px 0 0 8px;
  font-size: 15px;
  line-height: 24px;
  white-space: pre;
  background: ${c.panel};
`;
const Chain = styled.section`
  flex: 1;
  min-width: 0;
  display: flex;
  padding: 6px 6px 6px 0;
  background: ${c.frame};
  border-radius: 6px;
`;
const Grip = styled.div`
  width: 24px;
  flex: none;
  display: flex;
  align-items: center;
  justify-content: center;
`;
const ChainMeter = styled.div<{ $w: number }>`
  width: ${p => p.$w}px;
  flex: none;
  display: flex;
  align-items: center;
  justify-content: center;
  gap: 1px;
  i { width: 4px; height: 64px; background: linear-gradient(#161616 0 6px, #999 6px 8px, #161616 8px); }
`;
const Device = styled.article<{ $w: number }>`
  width: ${p => p.$w}px;
  flex: none;
  display: flex;
  flex-direction: column;
  background: ${c.panel};
  border-radius: 6px;
  overflow: hidden;
`;
const DeviceBar = styled.header<{ $selected?: boolean }>`
  height: 27px;
  flex: none;
  display: flex;
  align-items: center;
  gap: 6px;
  padding: 0 5px 0 4px;
  background: ${p => (p.$selected ? c.select : c.light)};
`;
const DeviceTitle = styled.h3`
  margin: 0 auto 0 2px;
  font-size: 17px;
  font-weight: 600;
`;
const Tabs = styled.div`
  display: flex;
  gap: 3px;
  align-self: stretch;
  align-items: center;
`;
const Tab = styled.button<{ $w: number; $current?: boolean; $plain?: boolean; $after?: number }>`
  width: ${p => p.$w}px;
  height: ${p => (p.$current ? 24 : 20)}px;
  align-self: ${p => (p.$current ? 'flex-end' : 'center')};
  margin-right: ${p => p.$after || 0}px;
  padding: ${p => (p.$current ? '0 0 4px' : 0)};
  border: 0;
  border-radius: ${p => (p.$current ? '6px 6px 0 0' : '5px')};
  background: ${p => (p.$plain ? 'none' : c.panel)};
  display: flex;
  align-items: center;
  justify-content: center;
  gap: 4px;
  white-space: nowrap;
`;
const Dot = styled.i<{ $on?: boolean }>`
  width: 8px;
  height: 8px;
  border-radius: 50%;
  background: ${p => (p.$on ? c.orange : '#5b5b5b')};
`;
const SamplerBody = styled.div`
  padding: 7px 11px 8px 10px;
`;
const WaveRow = styled.div`
  display: flex;
  gap: 7px;
  height: 169px;
  margin-bottom: 5px;
`;
const WaveSide = styled.div`
  width: 21px;
  height: 174px;
  display: flex;
  flex-direction: column;
  justify-content: flex-end;
  gap: 6px;
`;
const Fields = styled.div`
  display: grid;
  grid-template-columns: 65px 200px 73px 102px 164px 97px 97px 97px 75px 61px;
  column-gap: 9px;
  row-gap: 5px;
  padding-left: 1px;
`;
const Labelled = styled.div<{ $w?: number; $push?: boolean }>`
  width: ${p => (p.$w ? p.$w + 'px' : 'auto')};
  padding-top: ${p => (p.$push ? 20 : 0)}px;
  white-space: nowrap;
  label, span { display: block; height: 20px; }
`;
const FieldPair = styled.div`
  position: relative;
`;
const Nub = styled.svg`
  position: absolute;
  right: 1px;
  top: 4px;
`;

function NumberField({ label, value, w, from, to, off, nub, id }: { id: string; label: string; value: string; w: number; from?: number; to?: number; off?: boolean; nub?: string }) {
  return (
    <Labelled $w={w}>
      <label htmlFor={id}>{label}</label>
      <FieldPair>
        <Input id={id} $w={w} $from={from} $to={to} $off={off} defaultValue={value} />
        {nub && <Nub width="11" height="12"><path d="M11 0v12L0 6z" fill={nub} /></Nub>}
      </FieldPair>
    </Labelled>
  );
}

const modeIcon = (kind: string, dim?: boolean) => {
  const s = dim ? '#444' : '#000';
  return (
    <svg width="20" height="16" viewBox="0 0 20 16" fill="none" stroke={s} strokeWidth="1.800">
      {kind === 'hold' && <path d="M1 8h13M10 4l4 4l-4 4M18 2v12" />}
      {kind === 'loop' && <path d="M1 4.500h16M13 1l4 3.500l-4 3.500M1 11.500h16M13 8l4 3.500l-4 3.500" />}
      {kind === 'pingpong' && <path d="M4 4.500h14M14 1l4 3.500l-4 3.500M16 11.500H2M6 8l-4 3.500l4 3.500" />}
    </svg>
  );
};

type Pt = [number, number][];
const A = (s: string): Pt => s.split(',').map(p => { const [x, y] = p.split(':'); return [+x * 0.3746 - 40.4, +y * 0.2797 - 53.7]; });
const B = (s: string): Pt => s.split(',').map(p => { const [x, y] = p.split(':'); return [538.5 + +x * 0.3852, +y * 0.2797 - 53.7]; });
const topOne = [...A('112:345,140:328,165:310,180:275,190:275,205:305,235:322,290:325,310:345,340:345,365:310,395:250,415:285,435:270,460:325,500:335,520:345,545:335,570:285,600:272,625:268,640:240,655:265,662:295,700:310,740:320,770:320,795:265,817:240,835:290,865:320,960:322,985:338,1010:340,1035:285,1055:245,1078:240,1105:300,1130:320,1240:326,1262:325,1275:260,1310:230,1335:265,1385:310,1420:338,1440:332,1460:310,1475:270,1500:230,1525:270,1550:310,1568:325'),
  ...B('40:342,80:345,110:260,150:215,180:235,205:305,235:335,275:338,310:315,350:328,375:262,395:258,420:305,450:335,490:340,520:300,550:215,590:225,625:285,665:330,720:342,745:290,765:258,785:285,830:310,880:318,1095:325,1110:338,1180:346,1416:347')];
const botOne = [...A('112:352,165:385,180:420,195:418,210:385,290:373,310:355,340:355,360:390,380:430,398:458,415:425,430:425,455:375,500:365,520:355,550:365,570:400,600:430,625:435,640:475,660:410,700:390,770:380,785:400,800:455,817:450,845:385,960:372,1005:358,1025:400,1050:455,1085:462,1115:385,1150:378,1240:373,1262:375,1270:440,1320:468,1345:430,1400:370,1425:360,1450:375,1480:450,1510:450,1540:400,1568:375'),
  ...B('40:358,80:352,115:450,160:460,178:490,205:400,235:365,280:355,322:387,352:375,370:430,387:455,415:400,450:368,490:355,530:430,573:492,610:420,665:365,720:352,745:415,780:438,800:395,860:385,950:377,1100:375,1110:360,1180:352,1416:350')];
const topTwo = [...A('112:645,150:625,190:535,215:605,245:625,310:640,340:640,365:580,395:510,415:575,460:625,520:640,550:620,570:540,600:545,610:530,620:555,640:545,660:580,720:610,770:615,800:510,817:500,840:580,880:622,960:630,1010:632,1030:570,1050:520,1072:500,1100:575,1135:620,1240:628,1262:628,1270:500,1315:497,1345:570,1400:630,1440:635,1470:560,1490:498,1510:530,1540:590,1568:615'),
  ...B('30:632,80:640,100:570,120:495,183:495,200:580,240:630,280:635,320:618,350:622,365:550,382:503,410:570,445:625,490:635,520:580,545:497,600:497,625:580,665:630,720:640,750:580,785:570,820:600,890:620,950:627,1100:627,1180:642,1416:646')];
const botTwo = [...A('112:652,160:690,180:770,195:730,215:685,250:675,290:675,320:655,345:665,365:730,380:770,400:770,410:720,450:680,520:655,550:670,568:745,600:745,640:715,660:725,720:690,770:680,790:740,808:795,830:740,860:680,930:662,1010:662,1030:730,1045:785,1090:790,1105:730,1150:680,1240:665,1262:665,1270:795,1315:795,1345:720,1400:665,1440:660,1475:730,1490:790,1510:790,1530:740,1568:690'),
  ...B('40:660,80:655,105:730,118:795,188:795,205:710,250:660,290:665,340:675,352:680,372:795,400:795,410:740,450:690,490:660,520:720,545:795,600:795,625:710,665:665,720:655,752:735,790:735,805:700,860:680,950:670,1090:665,1120:658,1180:652,1416:650')];

function rough(points: Pt, mid: number, seed: number): Pt {
  const rand = rng(seed);
  const out: Pt = [];
  for (let i = 0; i < points.length - 1; i++) {
    const [x0, y0] = points[i];
    const [x1, y1] = points[i + 1];
    const n = Math.max(1, Math.round((x1 - x0) / 3));
    for (let j = 0; j < n; j++) {
      const f = j / n;
      const y = y0 + (y1 - y0) * f;
      out.push([x0 + (x1 - x0) * f, y + (rand() - 0.5) * Math.abs(y - mid) * 0.09]);
    }
  }
  out.push(points[points.length - 1]);
  return out;
}
const blob = (up: Pt, down: Pt, mid: number, seed: number) =>
  'M' + [...rough(up, mid, seed), ...rough(down, mid, seed + 9).reverse()].map(([x, y]) => `${x.toFixed(1)} ${y.toFixed(1)}`).join('L') + 'z';
const wavePath = blob(topOne, botOne, 43.9, 3) + blob(topTwo, botTwo, 127.8, 5);

const WaveScreen = styled.svg`
  background: ${c.screen};
  outline: 1px solid ${c.line};
  outline-offset: -1px;
  text { font-size: 16px; fill: #8b8b8b; }
`;

function WaveDisplay() {
  const marks = ['0:00', '0:30', '1:00', '1:30', '2:00', '2:30'];
  return (
    <WaveScreen width="1085" height="169">
      <path d={wavePath} fill="#646464" />
      <path d={Array.from({ length: 36 }, (_, i) => `M${Math.round(2 + i * 30.73) + 0.5} ${i % 6 ? 161 : 153}V169`).join('')} stroke="#777" />
      {marks.map((m, i) => <text key={m} x={5 + Math.round(i * 184.4)} y="159">{m}</text>)}
      <path d="M426 38h4v14h-4zM426 114h4v30h-4z" fill="#a8761f" />
      <path d="M425.500 20V169M431.500 20V169" stroke="#c4c4c4" />
      <path d="M428.500 19V34L418 27zM432 19V34L440 27z" fill="#a4a4a4" />
    </WaveScreen>
  );
}

const TinyButton = styled(Button)`
  font-size: 12px;
`;

function Sampler() {
  return (
    <Device $w={1134}>
      <DeviceBar $selected>
        <RoundButton $fill={c.orange} aria-label="Device on" />
        <DeviceTitle>digital_minor_key</DeviceTitle>
        <Tabs>
          <Tab $w={76} $after={4}><Dot $on />Zone<svg width="13" height="15"><path d="M6.500 0L13 15H0z" /></svg></Tab>
          <Tab $w={76} $current>Sample</Tab>
          <Tab $w={112}><Dot />Pitch/Osc<Dot /></Tab>
          <Tab $w={137}><Dot /><Dot />Filter/Global</Tab>
          <Tab $w={147}><Dot />Modulation<Dot /><Dot /><Dot /></Tab>
          <Tab $w={62}><Dot />MIDI</Tab>
          <Tab $w={38} $plain>MPE</Tab>
        </Tabs>
        <RoundButton aria-label="Hot swap"><SwapIcon /></RoundButton>
        <RoundButton aria-label="Save preset"><DiskIcon /></RoundButton>
      </DeviceBar>
      <SamplerBody>
        <WaveRow>
          <WaveDisplay />
          <WaveSide>
            <RangeShell>
              <svg width="21" height="64"><path d="M0 1h3v55H0z" /><path d="M5 54l13 -8v16z" fill="#c0c0c0" stroke={c.line} /></svg>
              <HiddenRange type="range" aria-label="Vertical zoom" />
            </RangeShell>
            <Button $tone={c.field} $dim>B</Button>
            <Button $dim>M</Button>
            <Button $dim>L</Button>
            <Button $dim>R</Button>
          </WaveSide>
        </WaveRow>
        <Fields>
          <Labelled $w={61}><span>Reverse</span><Button>Off</Button></Labelled>
          <Labelled><span>Sample</span>
            <Row $gap={7}><Select label="Sample" w={168} value="zero click successful" /><RoundButton aria-label="Swap sample"><SwapIcon /></RoundButton></Row>
          </Labelled>
          <NumberField id="vol" label="Vol" value="3.2 dB" w={68} nub={c.cyan} />
          <NumberField id="sample-start" label="Sample Start" value="3046063" w={97} />
          <Labelled><span>Sustain Mode</span>
            <Row $gap={5}>
              <Button $w={33} $on aria-label="No loop">{modeIcon('hold')}</Button>
              <Button $w={33} aria-label="Loop">{modeIcon('loop')}</Button>
              <Button $w={33} aria-label="Ping-pong loop">{modeIcon('pingpong')}</Button>
              <Spacer />
              <Button $w={39}>Link</Button>
              <Spacer />
            </Row>
          </Labelled>
          <NumberField id="loop-start" label="Loop Start" value="3046390" w={97} off />
          <NumberField id="loop-end" label="Loop End" value="3073987" w={97} off />
          <NumberField id="fade-sustain" label="Crossfade" value="0" w={97} off />
          <NumberField id="detune-sustain" label="Detune" value="0 ct" w={72} off nub={c.field} />
          <Labelled><span>Interpol</span><Select label="Interpolation" w={61} value="Norm" /></Labelled>

          <Labelled $w={61}><span>Snap</span><Button $on>On</Button></Labelled>
          <Row $gap={6}>
            <NumberField id="root" label="Root" value="C4" w={60} to={56} />
            <NumberField id="detune" label="Detune" value="0 ct" w={63} nub="#b4b4b4" />
            <NumberField id="scale" label="Scale" value="100 %" w={63} nub="#b4b4b4" />
          </Row>
          <NumberField id="pan" label="Pan" value="25L" w={68} from={24} to={51} />
          <NumberField id="sample-end" label="Sample End" value="3073642" w={97} />
          <Labelled><span>Release Mode</span>
            <Row $gap={5}>
              <TinyButton $w={33} $tone={c.field}>OFF</TinyButton>
              <Button $w={33} aria-label="Release no loop">{modeIcon('hold', true)}</Button>
              <Button $w={33} aria-label="Release loop">{modeIcon('loop', true)}</Button>
              <Button $w={33} aria-label="Release ping-pong">{modeIcon('pingpong', true)}</Button>
            </Row>
          </Labelled>
          <NumberField id="release-loop" label="Release Loop" value="0" w={97} off />
          <div />
          <NumberField id="fade-release" label="Crossfade" value="0" w={97} off />
          <NumberField id="detune-release" label="Detune" value="0 ct" w={72} off nub={c.field} />
          <Labelled $push><Button>RAM</Button></Labelled>
        </Fields>
      </SamplerBody>
    </Device>
  );
}

const Columns = styled.div`
  flex: 1;
  display: flex;
`;
const Column = styled.div<{ $w: number; $top?: number; $left?: boolean; $gap?: number }>`
  width: ${p => p.$w}px;
  flex: none;
  display: flex;
  flex-direction: column;
  align-items: ${p => (p.$left ? 'flex-start' : 'center')};
  padding-top: ${p => p.$top || 0}px;
  gap: ${p => p.$gap || 0}px;
  white-space: nowrap;
`;
const Group = styled.div<{ $before?: number; $gap?: number }>`
  display: flex;
  flex-direction: column;
  align-items: center;
  gap: ${p => p.$gap || 0}px;
  margin-top: ${p => p.$before || 0}px;
`;
const Rule = styled.div<{ $top?: number; $bottom?: number }>`
  width: 1px;
  flex: none;
  margin: ${p => p.$top || 5}px 0 ${p => p.$bottom || 7}px;
  background: #4d4d4d;
`;
const SplitRule = styled.div<{ $w: number }>`
  width: ${p => p.$w}px;
  flex: none;
  display: flex;
  flex-direction: column;
  align-items: center;
  gap: 5px;
  &::before, &::after { content: ''; width: 1px; background: #4d4d4d; }
  &::before { flex: 168; }
  &::after { flex: 61; }
`;
const ChorusSplit = styled(SplitRule)`
  margin: 10px 0 7px;
`;
const Strong = styled.span`
  font-weight: 600;
`;
const Pad = styled.svg`
  background: ${c.screen};
  border-radius: 5px;
`;
const ModBlock = styled.div`
  padding-left: 9px;
  display: flex;
  flex-direction: column;
  gap: 2px;
`;
const ModFields = styled.div`
  width: 192px;
  margin-top: 1px;
  display: flex;
  justify-content: space-between;
  align-items: flex-end;
`;
const NumberBlock = styled.label`
  display: flex;
  flex-direction: column;
  gap: 3px;
`;

function Chorus() {
  return (
    <Device $w={485}>
      <DeviceBar>
        <RoundButton $fill={c.orange} aria-label="Device on" />
        <DeviceTitle>Chorus</DeviceTitle>
        <RoundButton aria-label="Hot swap"><SwapIcon /></RoundButton>
        <RoundButton aria-label="Save preset"><DiskIcon /></RoundButton>
      </DeviceBar>
      <Columns>
        <Column $w={84} $top={6}>
          <Strong>Delay 1</Strong>
          Highpass
          <Knob label="Highpass" angle={25} />
          1.00 kHz
          <Group $before={19} $gap={10}><Fader label="Delay 1 time" height={114} at={71} />3.00 ms</Group>
        </Column>
        <ChorusSplit $w={17}><Button $w={17}>=</Button></ChorusSplit>
        <Column $w={79} $top={5}>
          <Strong>Delay 2</Strong>
          <Group $before={8} $gap={6}><Button $w={43}>Off</Button><Button $w={43}>Fix</Button><Button $w={43} $on>Mod</Button></Group>
          <Group $before={17} $gap={10}><Fader label="Delay 2 time" height={114} at={47} />7.00 ms</Group>
        </Column>
        <Rule />
        <Column $w={208} $top={6} $left>
          <ModBlock>
            <Strong>Modulation</Strong>
            <Pad width="192" height="190"><circle cx="133" cy="31" r="9.500" fill="none" stroke={c.orange} strokeWidth="3" /></Pad>
            <ModFields>
              <NumberBlock htmlFor="amount">Amount<Input id="amount" $w={72} $to={87} defaultValue="5.00 ms" /></NumberBlock>
              <Button $w={36}>*20</Button>
              <NumberBlock htmlFor="rate">Rate<Input id="rate" $w={69} $to={72} defaultValue="5.40 Hz" /></NumberBlock>
            </ModFields>
          </ModBlock>
        </Column>
        <Rule />
        <Column $w={95} $top={5}>
          Polarity
          <Group $before={9} $gap={6}><Button $w={36}>-</Button><Button $w={36} $on>+</Button></Group>
          <Group $before={18}>Feedback<Knob label="Chorus feedback" angle={-150} />0.0 %</Group>
          <Group $before={8}>Dry/Wet<Knob label="Chorus dry/wet" angle={0} />50 %</Group>
        </Column>
      </Columns>
    </Device>
  );
}

const DelayBody = styled.div`
  flex: 1;
  display: flex;
  gap: 10px;
  padding: 6px 10px 7px;
`;
const Taps = styled.div`
  display: flex;
`;
const TapColumn = styled.div`
  width: 75px;
  display: flex;
  flex-direction: column;
  text-align: center;
  gap: 6px;
  span { margin-bottom: -3px; }
`;
const TapGrid = styled.div`
  display: grid;
  grid-template-columns: 1fr 1fr;
  gap: 6px;
`;
const DelaySplit = styled(SplitRule)`
  margin-top: 23px;
  &::before { flex: 1; }
  &::after { flex: 1; }
`;
const FeedbackRow = styled.div`
  display: grid;
  grid-template-columns: 1fr 46px 1fr;
  align-items: center;
  div { display: flex; align-items: center; gap: 8px; padding-left: 7px; }
  hr { width: 18px; margin: 0; border: 0; border-top: 1px solid #444; }
`;
const TallButton = styled(Button)`
  height: 24px;
`;
const Screen = styled.div`
  width: 281px;
  background: ${c.screen};
  border-radius: 5px;
  overflow: hidden;
  color: #a2a2a2;
  b { color: #f0a043; font-weight: 600; }
`;
const FilterRow = styled.div`
  display: flex;
  align-items: center;
  padding: 7px 13px 11px 9px;
  gap: 10px;
  label { display: flex; align-items: center; gap: 10px; }
  label + b { margin-right: auto; }
`;
const Check = styled.input`
  appearance: none;
  width: 15px;
  height: 15px;
  margin: 0;
  background: ${c.orange};
`;
const Legend = styled.div`
  display: flex;
  align-items: center;
  gap: 5px;
  margin-bottom: 3px;
  &::before, &::after { content: ''; flex: 1; height: 1px; background: #555; }
`;
const Trio = styled.div`
  display: grid;
  grid-template-columns: repeat(3, 83px);
  justify-content: center;
  text-align: center;
  row-gap: 4px;
`;
const Upgrade = styled.button`
  width: 85px;
  height: 20px;
  border: 1px solid #333;
  border-radius: 10px;
  background: #b0afb0;
  line-height: 18px;
`;
const ModeBlock = styled.div`
  width: 88px;
  display: flex;
  flex-direction: column;
  gap: 6px;
  span { margin-bottom: -3px; }
`;

const curvePts = '546:690,600:670,627:650,660:605,690:545,720:490,750:430,780:395,820:372,860:364,895:363,935:365,975:376,1010:400,1040:445,1075:515,1110:590,1145:645,1180:675,1210:693,1236:700'
  .split(',').map(p => { const [x, y] = p.split(':'); return [(+x - 546) * 0.4067, (+y - 190) * 0.2797]; });
const curve = curvePts.map(([x, y], i) => {
  if (!i) return `M${x.toFixed(1)} ${y.toFixed(1)}`;
  const p = curvePts[i - 1];
  const pp = curvePts[i - 2] || p;
  const n = curvePts[i + 1] || [x, y];
  return `C${(p[0] + (x - pp[0]) / 6).toFixed(1)} ${(p[1] + (y - pp[1]) / 6).toFixed(1)} ${(x - (n[0] - p[0]) / 6).toFixed(1)} ${(y - (n[1] - p[1]) / 6).toFixed(1)} ${x.toFixed(1)} ${y.toFixed(1)}`;
}).join('');

function TapSide({ name, off }: { name: string; off?: boolean }) {
  return (
    <TapColumn>
      <span>{name}</span>
      <Button $on>Sync</Button>
      <TapGrid>{['1', '2', '3', '4', '5', '6', '8', '16'].map(n => <Button key={n} $on={n === '3'}>{n}</Button>)}</TapGrid>
      <FieldPair>
        <Input aria-label={`${name} offset`} $off={off} defaultValue="0.0 %" />
        <Nub width="11" height="12"><path d="M11 0v12L0 6z" fill={off ? c.field : '#b4b4b4'} /></Nub>
      </FieldPair>
    </TapColumn>
  );
}

function Delay() {
  const thin = [9, 17, 21, 26, 29, 67, 86, 99, 110, 118, 124, 130, 133, 137, 174, 193, 207, 219, 227, 233, 239, 244, 249];
  return (
    <Device $w={596}>
      <DeviceBar>
        <RoundButton $fill={c.orange} aria-label="Device on" />
        <DeviceTitle>Delay</DeviceTitle>
        <Upgrade>Upgrade</Upgrade>
        <RoundButton aria-label="Hot swap"><SwapIcon /></RoundButton>
        <RoundButton aria-label="Save preset"><DiskIcon /></RoundButton>
      </DeviceBar>
      <DelayBody>
        <Column $w={187}>
          <Taps>
            <TapSide name="Left" />
            <DelaySplit $w={37}>
              <Button $w={26} $on aria-label="Link channels">
                <svg width="18" height="10" fill="none" stroke="#000" strokeWidth="2"><path d="M0 5h5M13 5h5M7 1h4q2 0 2 2v4q0 2 -2 2H7q-2 0 -2 -2V3q0 -2 2 -2z" /></svg>
              </Button>
            </DelaySplit>
            <TapSide name="Right" off />
          </Taps>
          <Group $before={9}>Feedback
            <FeedbackRow>
              <i />
              <Knob label="Delay feedback" angle={38} />
              <div><hr /><TallButton $w={37} aria-label="Freeze">
                <svg width="26" height="14" fill="none" stroke="#000" strokeWidth="2"><path d="M13 7Q9 1 6 1a5 6 0 0 0 0 12Q9 13 13 7Q17 1 20 1a5 6 0 0 1 0 12Q17 13 13 7z" /></svg>
              </TallButton></div>
            </FeedbackRow>
            60 %
          </Group>
        </Column>
        <Screen>
          <svg width="281" height="145" fill="none">
            <path d={thin.map(x => `M${x + 0.5} 0V144`).join('')} stroke="#383838" />
            <path d="M0 72.500H281M0 96.500H281M0 120.500H281M0 144.500H281" stroke="#3c3c3c" />
            <path d="M33.500 0V144M142.500 0V144M252.500 0V144M0 49.500H281" stroke="#5a5a5a" />
            <path d={curve} stroke="#58c0da" strokeWidth="2" />
            <circle cx="142" cy="83" r="9.500" stroke={c.orange} strokeWidth="3" />
          </svg>
          <FilterRow>
            <label><Check type="checkbox" defaultChecked />Filter</label><b>1.00 kHz</b>
            <span>Width <b>4.00</b></span>
          </FilterRow>
          <Legend>Modulation</Legend>
          <Trio><span>Rate</span><span>Filter</span><span>Time</span><b>0.50 Hz</b><b>0.0 %</b><b>0.0 %</b></Trio>
        </Screen>
        <Column $w={88}>
          <ModeBlock>
            <span>Mode</span>
            <Button>Repitch</Button>
            <Button $on>Fade</Button>
            <Button>Jump</Button>
          </ModeBlock>
          <Group $before={30}><Button $w={88} $on>Ping Pong</Button></Group>
          <Group $before={37}>Dry/Wet<Knob label="Delay dry/wet" angle={18} />56 %</Group>
        </Column>
      </DelayBody>
    </Device>
  );
}
const DropSlot = styled.div`
  flex: 1;
  display: flex;
  align-items: center;
  justify-content: center;
  background: ${c.panel};
`;

const help = `Displays all clips that normally play
through the track's mixer. Click and drag
to select time, then use any available Edit
menu command to edit.

[Cmd + Arrow Up/Down] Insert Clips from
Previous/Next Take Lane
[Cmd + Opt + Drag] Scroll Display
[Cmd + Scroll Wheel] Zoom In/Out
[Opt + Scroll Wheel] Adjust Lane Height
Hold [F] to View and Edit Fades`;

/* ---------- status bar ---------- */

const Status = styled.footer`
  flex: none;
  height: 35px;
  display: flex;
  gap: 14px;
  align-items: flex-start;
`;
const StatusFrame = styled.div`
  flex: 1;
  height: 35px;
  padding: 4px;
  border-radius: 5px;
  background: ${c.frame};
`;
const StatusText = styled.div`
  height: 26px;
  display: flex;
  align-items: center;
  gap: 20px;
  padding-left: 12px;
  background: ${c.panel};
`;
const MiniFrame = styled(StatusFrame)`
  flex: none;
  width: 330px;
  svg { background: ${c.light}; }
`;
const TrackTab = styled.div`
  width: 376px;
  height: 48px;
  margin-top: -14px;
  padding: 18px 4px 4px 7px;
  display: flex;
  align-items: center;
  gap: 3px;
  background: ${c.frame};
  border-radius: 0 0 6px 6px;
  color: #0a0a0a;
  font-size: 17px;
  font-weight: 600;
  white-space: nowrap;
`;
const TabName = styled.span`
  flex: 1;
`;

const TriangleIcon = () => <svg width="19" height="19"><path d="M9.500 0L18.500 19H0z" fill="#a0a0a0" /></svg>;

export default function App() {
  return (
    <>
      <Global />
      <Shell>
        <Upper>
          <Browser />
          <MainColumn>
            <ArrangementView />
            <ZoneEditor />
          </MainColumn>
        </Upper>
        <Lower>
          <InfoFrame>
            <InfoTitle>Main Lane</InfoTitle>
            <InfoText>{help}</InfoText>
          </InfoFrame>
          <Chain>
            <Grip><svg width="4" height="64" fill="#222"><path d={Array.from({ length: 10 }, (_, i) => `M0 ${Math.round(i * 6.5)}h4v4h-4z`).join('')} /></svg></Grip>
            <Sampler />
            <ChainMeter $w={17}><i /><i /></ChainMeter>
            <Chorus />
            <ChainMeter $w={18}><i /><i /></ChainMeter>
            <Delay />
            <ChainMeter $w={18}><i /><i /></ChainMeter>
            <DropSlot>Drop an Instrument or Sample Here</DropSlot>
          </Chain>
        </Lower>
        <Status>
          <CornerButton aria-label="Hide info view" $top><TriangleIcon /></CornerButton>
          <StatusFrame>
            <StatusText>
              <span>Time Selection</span><span>Start: 2834.4.1+</span><span>End: 3339.4.4+</span><span>Length: 505.0.2+ (Duration: 9:37:353)</span>
            </StatusText>
          </StatusFrame>
          <MiniFrame>
            <svg width="322" height="26" viewBox="0 0 740 300" preserveAspectRatio="none">
              <path d={noteRects(keyLong, 0, 740, 5, 1, 0.9, 1116, 20, 15)} fill="#1c1c1c" fillOpacity="0.95" />
            </svg>
          </MiniFrame>
          <TrackTab>
            <TabName>3-digital_minor_key</TabName>
            <svg width="98" height="26"><path d="M0 0h98v26H0z" fill="#a6a6a6" /><path d="M1 4h94v14H1z" fill="#151515" /><path d={Array.from({ length: 18 }, (_, i) => `M${3 + i * 5} 6h3v5h-3zM${3 + i * 5} 12h3v5h-3z`).join('')} fill="#8a8a8a" /><path d="M14 0h22v2H14z" fill={c.select} /><path d="M0 0h2v2H0zM41 20h4v2h-4zM0 22h5v2H0z" fill={c.orange} /><path d="M8 20h28v1H8zM50 20h40v1H50zM8 23h28v1H8zM50 23h24v1H50z" fill="#666" /></svg>
            <svg width="43" height="26"><path d="M0 0h43v26H0z" fill="#a0a0a0" /><path d="M17 4h16v17H17z" fill="#111" /><path d="M9 9h4v4H9zM37 8h3v2h-3zM27 7h2v2h-2z" fill={c.orange} /><path d="M16 23h17v2H16z" fill={c.cyan} /><path d="M4 5v16M8 14v8M38 14v8" stroke="#666" /></svg>
            <svg width="53" height="26"><path d="M0 0h53v26H0z" fill="#a0a0a0" /><path d="M18 3h25v23H18z" fill="#111" /><path d="M21 13Q25 13 27 8T34 8T41 13" fill="none" stroke="#2f6b7a" /><path d="M1 4h6v2H1zM10 4h6v2h-6zM1 10h3v3H1zM10 10h3v3h-3zM45 7h6v3h-6zM45 14h6v3h-6z" fill={c.orange} /><path d="M20 17h21v1H20zM22 22h17v1H22z" fill="#8a5a20" /></svg>
          </TrackTab>
          <CornerButton aria-label="Hide detail view" $top><TriangleIcon /></CornerButton>
        </Status>
      </Shell>
    </>
  );
}
